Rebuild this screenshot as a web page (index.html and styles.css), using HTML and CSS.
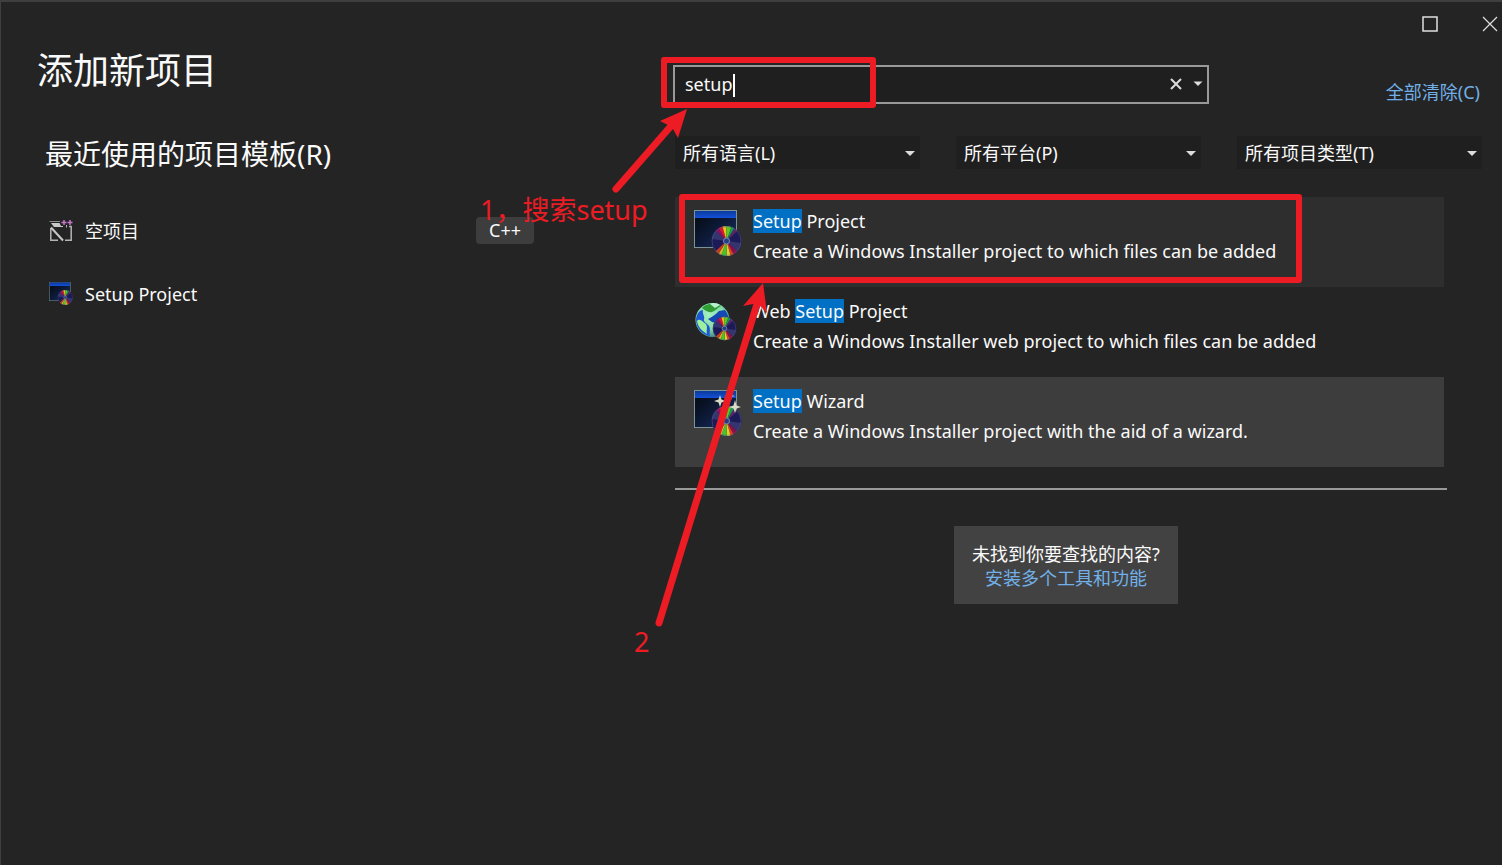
FILE: index.html
```html
<!DOCTYPE html>
<html lang="zh-CN">
<head>
    <meta charset="UTF-8">
    <meta name="viewport" content="width=device-width, initial-scale=1.0">
    <title>添加新项目</title>
    <link rel="stylesheet" href="styles.css">
</head>
<body>
    <!-- shared icon parts -->
    <svg class="defs" width="0" height="0" aria-hidden="true">
        <defs>
            <linearGradient id="bar" x1="0" y1="0" x2="0" y2="1">
                <stop offset="0" stop-color="#0a3a9c"/>
                <stop offset="1" stop-color="#1450d8"/>
            </linearGradient>
            <linearGradient id="screen" x1="0" y1="0" x2="1" y2="1">
                <stop offset="0" stop-color="#04070c"/>
                <stop offset="0.5" stop-color="#0d1a38"/>
                <stop offset="1" stop-color="#1b3468"/>
            </linearGradient>
            <radialGradient id="earth" cx="0.4" cy="0.35" r="0.7">
                <stop offset="0" stop-color="#a4f0c0"/>
                <stop offset="0.6" stop-color="#84dca8"/>
                <stop offset="1" stop-color="#3c7a86"/>
            </radialGradient>
            <symbol id="disc" viewBox="-16 -16 32 32">
                <circle r="15" fill="#1c1b58"/>
                <path d="M0 0L-15 -2A15 15 0 0 1 -10.6 -10.6Z" fill="#34346e"/>
                <path d="M0 0L15 2A15 15 0 0 1 10.6 10.6Z" fill="#34346e"/>
                <path d="M0 0L-10.6 -10.6A15 15 0 0 1 -6.3 -13.6Z" fill="#8c1060"/>
                <path d="M0 0L-7.5 -13A15 15 0 0 1 -4 -14.5Z" fill="#d81a2c"/>
                <path d="M0 0L-4 -14.5A15 15 0 0 1 0 -15Z" fill="#e8c020"/>
                <path d="M0 0L0 -15A15 15 0 0 1 5 -14.1Z" fill="#5cc81c"/>
                <path d="M0 0L5 -14.1A15 15 0 0 1 8 -12.7Z" fill="#169c50"/>
                <path d="M0 0L8 -12.7A15 15 0 0 1 11 -10.2Z" fill="#5c2468"/>
                <path d="M0 0L10.6 10.6A15 15 0 0 1 7 13.3Z" fill="#8c1048"/>
                <path d="M0 0L7 13.3A15 15 0 0 1 4 14.5Z" fill="#e0401c"/>
                <path d="M0 0L4 14.5A15 15 0 0 1 0 15Z" fill="#e8d020"/>
                <path d="M0 0L0 15A15 15 0 0 1 -5 14.1Z" fill="#44c430"/>
                <path d="M0 0L-5 14.1A15 15 0 0 1 -8 12.7Z" fill="#d8b820"/>
                <path d="M0 0L-8 12.7A15 15 0 0 1 -11 10.2Z" fill="#c83c1c"/>
                <circle r="14.5" fill="none" stroke="#5a5a8c" stroke-opacity="0.5"/>
                <circle r="3" fill="#23407e" stroke="#7a86b8"/>
            </symbol>
            <symbol id="setup" viewBox="0 0 48 48">
                <rect x="0.5" y="0.5" width="42" height="37" fill="url(#screen)" stroke="#7d9496"/>
                <rect x="1" y="1" width="41" height="7" fill="url(#bar)"/>
                <use href="#disc" x="16.5" y="15" width="32" height="32"/>
            </symbol>
        </defs>
    </svg>

    <div class="window">
        <div class="titlebar">
            <button class="win-btn" type="button" aria-label="最大化">
                <svg width="16" height="16" viewBox="0 0 16 16"><rect x="1" y="1" width="14" height="14" fill="none" stroke="#e0e0e0" stroke-width="1.5"/></svg>
            </button>
            <button class="win-btn" type="button" aria-label="关闭">
                <svg width="16" height="16" viewBox="0 0 16 16"><path d="M1 1L15 15M15 1L1 15" stroke="#e0e0e0" stroke-width="1.2"/></svg>
            </button>
        </div>

        <div class="content">
            <div class="recent">
                <h1>添加新项目</h1>
                <h2>最近使用的项目模板(R)</h2>
                <ul class="recent-list">
                    <li>
                        <svg width="24" height="24" viewBox="0 0 24 24">
                            <path d="M0.5 2.5H11" stroke="#8c8c8c"/>
                            <path d="M2 4H10.5L12 7H14V8H5Z" fill="#c8c8c8"/>
                            <path d="M17.5 6V8.5" stroke="#b4b4b4"/>
                            <path d="M1.8 9V21.200H9M16 21.200H22.200V7.500H20" stroke="#b4b4b4" stroke-width="1.500" fill="none"/>
                            <path d="M2 8.500L14 21.500" stroke="#c8c8c8" stroke-width="2"/>
                            <path d="M12.500 3.500H17.500M15 1V6M18.500 3.500H23.500M21 1V6" stroke="#c678c8" stroke-width="1.500"/>
                        </svg>
                        <span class="recent-name">空项目</span>
                        <span class="tag">C++</span>
                    </li>
                    <li>
                        <svg width="24" height="24"><use href="#setup" width="24" height="24"/></svg>
                        <span class="recent-name">Setup Project</span>
                    </li>
                </ul>
            </div>

            <div class="templates">
                <div class="search-row">
                    <div class="search">
                        <input type="text" value="setup" aria-label="搜索模板">
                        <span class="caret"></span>
                        <button type="button" aria-label="清除">
                            <svg width="14" height="14" viewBox="0 0 14 14"><path d="M2 2L12 12M12 2L2 12" stroke="#dcdcdc" stroke-width="2"/></svg>
                        </button>
                        <button type="button" aria-label="搜索历史">
                            <svg width="10" height="6" viewBox="0 0 10 6"><path d="M0.500 0.500H9.500L5 5Z" fill="#dcdcdc"/></svg>
                        </button>
                    </div>
                    <a class="clear-all" href="#">全部清除(C)</a>
                </div>

                <div class="filters">
                    <div class="filter"><select aria-label="语言"><option>所有语言(L)</option></select></div>
                    <div class="filter"><select aria-label="平台"><option>所有平台(P)</option></select></div>
                    <div class="filter"><select aria-label="项目类型"><option>所有项目类型(T)</option></select></div>
                </div>

                <ul class="results">
                    <li class="selected">
                        <svg width="48" height="48"><use href="#setup" width="48" height="48"/></svg>
                        <div>
                            <p><mark>Setup</mark> Project</p>
                            <p>Create a Windows Installer project to which files can be added</p>
                        </div>
                    </li>
                    <li>
                        <svg width="48" height="48" viewBox="0 0 48 48">
                            <circle cx="18.500" cy="20" r="17" fill="url(#earth)"/>
                            <path d="M2 19C3 13 6 10 9 10C8 14 11 16 10 19C9 22 13 23 15 26C17 29 15 33 16 36C9 35 2 29 2 19Z" fill="#1c58d0"/>
                            <path d="M14 19C18 17 21 15 25 11L31 10C34 14 35 18 35 22L28 21C24 18 22 24 18 22Z" fill="#1448b4"/>
                            <path d="M8 8C12 3 23 2 27 6C23 8 23 10 18 12C14 13 11 10 8 8Z" fill="#2f9c34"/>
                            <path d="M3 21C5 18 8 21 12 24C14 27 12 30 13 34C8 31 4 27 3 21Z" fill="#9ef0a0"/>
                            <path d="M16 4C18 2 24 3 26 5L21 8Z" fill="#b8f0d0"/>
                            <use href="#disc" x="18" y="16" width="25" height="25"/>
                        </svg>
                        <div>
                            <p>Web <mark>Setup</mark> Project</p>
                            <p>Create a Windows Installer web project to which files can be added</p>
                        </div>
                    </li>
                    <li class="hovered">
                        <svg width="48" height="48" viewBox="0 0 48 48">
                            <use href="#setup" width="48" height="48"/>
                            <path d="M26 5L27.500 9.500L32 11L27.500 12.500L26 17L24.500 12.500L20 11L24.500 9.500ZM41 10L42.500 15.500L47 17L42.500 18.500L41 23L39.500 18.500L35 17L39.500 15.500Z" fill="#d8dcc8"/>
                            <path d="M37 2L38 5L41 6L38 7L37 10L36 7L33 6L36 5Z" fill="#b0b8b0"/>
                        </svg>
                        <div>
                            <p><mark>Setup</mark> Wizard</p>
                            <p>Create a Windows Installer project with the aid of a wizard.</p>
                        </div>
                    </li>
                </ul>

                <hr>

                <div class="more">
                    <div class="more-box">
                        <p>未找到你要查找的内容?</p>
                        <a href="#">安装多个工具和功能</a>
                    </div>
                </div>
            </div>
        </div>

        <!-- numbered steps drawn over the dialog -->
        <svg class="steps" width="1502" height="865" viewBox="0 0 1502 865">
            <g fill="none" stroke="#ed1c24" stroke-width="6" stroke-linejoin="round">
                <rect x="664" y="60" width="209" height="45"/>
                <rect x="682" y="197" width="617" height="83"/>
            </g>
            <g stroke="#ed1c24" stroke-width="7" stroke-linecap="round">
                <path d="M616 189L671 126"/>
                <path d="M659 623L757 304"/>
            </g>
            <g fill="#ed1c24">
                <path d="M687 109L660 121L668 125L673 129L678 138Z"/>
                <path d="M763 283L743 306L753 304L760 306L767 313Z"/>
            </g>
            <g class="step-text">
                <text x="480" y="220">1，搜索setup</text>
                <text x="634" y="652">2</text>
            </g>
        </svg>
    </div>
</body>
</html>
```
FILE: styles.css
```css
* {
    margin: 0;
    padding: 0;
    box-sizing: border-box;
}
body {
    background-color: #242424;
    color: #fafafa;
    font-family: "Noto Sans", "Noto Sans CJK SC", sans-serif;
    font-size: 18px;
    line-height: 30px;
}
ul {
    list-style: none;
}
a {
    color: #71b0e8;
    text-decoration: none;
}
button {
    background: none;
    border: none;
    cursor: pointer;
}
svg {
    display: block;
    flex-shrink: 0;
}
.defs {
    position: absolute;
}
.window {
    position: relative;
    min-height: 100vh;
    border-top: 2px solid #3f3f3f;
    border-left: 1px solid #3f3f3f;
    overflow: hidden;
}
.titlebar {
    display: flex;
    justify-content: flex-end;
    gap: 36px;
    height: 44px;
}
.win-btn {
    display: flex;
    align-items: center;
    justify-content: center;
    width: 24px;
}
.content {
    display: grid;
    grid-template-columns: 638px 1fr;
    padding: 0 20px 0 36px;
}

/* left side */
h1 {
    font-size: 36px;
    font-weight: 400;
    line-height: 50px;
}
h2 {
    margin-top: 38px;
    padding-left: 8px;
    font-size: 28px;
    font-weight: 400;
    line-height: 40px;
}
.recent-list {
    margin-top: 25px;
    padding: 0 141px 0 12px;
}
.recent-list li {
    display: flex;
    align-items: center;
    gap: 12px;
    height: 63px;
}
.recent-name {
    flex: 1;
}
.tag {
    padding: 0 13px;
    border-radius: 4px;
    background-color: #3d3d3d;
    line-height: 27px;
}

/* right side */
.search-row {
    display: flex;
    align-items: center;
    justify-content: space-between;
    margin: 15px 0 0 -2px;
}
.search {
    position: relative;
    display: flex;
    align-items: center;
    gap: 8px;
    width: 536px;
    height: 39px;
    padding-right: 4px;
    border: 2px solid #999;
    background-color: #1f1f1f;
}
.search input {
    flex: 1;
    min-width: 0;
    padding-left: 10px;
    border: none;
    outline: none;
    background: none;
    color: #fafafa;
    font: inherit;
}
.search button {
    padding: 0 0 0 2px;
}
.caret {
    position: absolute;
    left: 58px;
    top: 7px;
    width: 2px;
    height: 23px;
    background-color: #fff;
}
.clear-all {
    padding: 16px 2px 0 0;
}
.filters {
    display: grid;
    grid-template-columns: repeat(3, 1fr);
    gap: 36px;
    margin-top: 29px;
}
.filter {
    position: relative;
}
.filter::after {
    content: "";
    position: absolute;
    right: 5px;
    top: 15px;
    border: 5px solid transparent;
    border-top-color: #dcdcdc;
    border-bottom: none;
    pointer-events: none;
}
.filter select {
    display: block;
    width: 100%;
    height: 33px;
    padding-left: 8px;
    border: none;
    appearance: none;
    background-color: #1f1f1f;
    color: #fafafa;
    font: inherit;
}
.results {
    margin: 28px 38px 0 0;
}
.results li {
    display: flex;
    gap: 11px;
    height: 90px;
    padding: 9px 0 0 19px;
}
.results svg {
    margin-top: 4px;
}
.results .selected {
    background-color: #2e2e2e;
}
.results .hovered {
    background-color: #3d3d3d;
}
mark {
    background-color: #0070c4;
    color: #fafafa;
}
hr {
    margin: 21px 35px 0 0;
    border: none;
    border-top: 2px solid #999;
}
.more {
    display: flex;
    justify-content: center;
    margin-top: 36px;
    padding-right: 25px;
}
.more-box {
    padding: 16px 18px 14px;
    background-color: #424242;
    line-height: 24px;
    text-align: center;
}

/* steps */
.steps {
    position: absolute;
    left: -1px;
    top: -2px;
    pointer-events: none;
}
.step-text {
    fill: #ed1c24;
    font-size: 27px;
}
```
